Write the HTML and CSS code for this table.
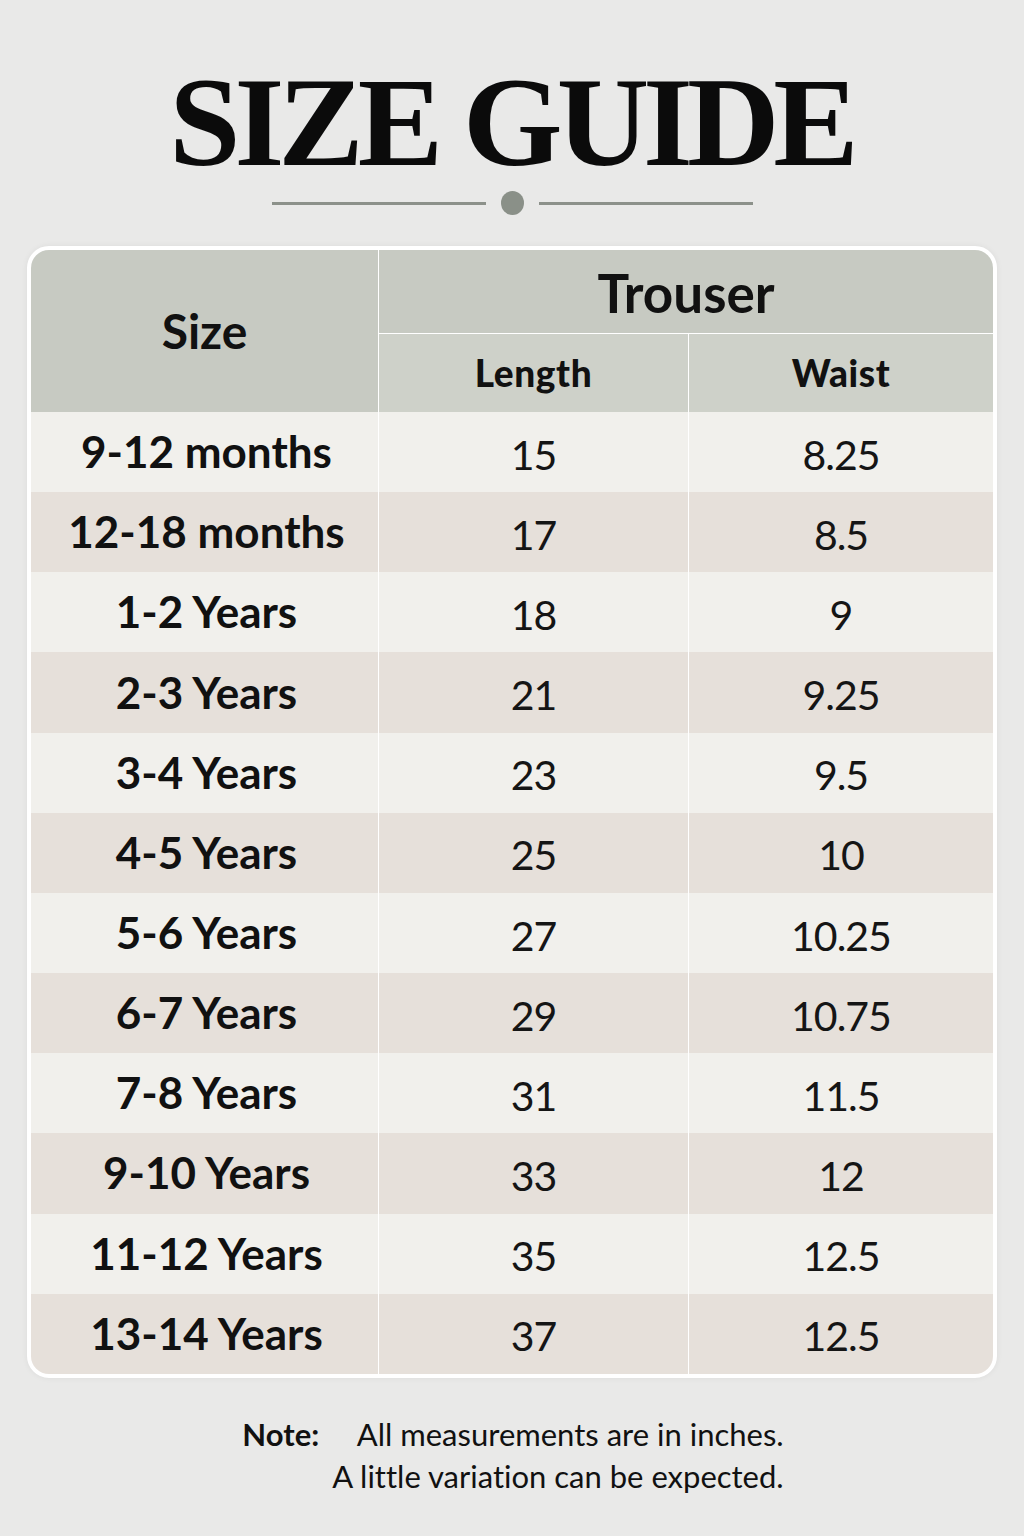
FILE: index.html
```html
<!DOCTYPE html>
<html lang="en">
<head>
<meta charset="utf-8">
<title>Size Guide</title>
<link rel="stylesheet" href="styles.css">
</head>
<body>
<main class="page">
  <h1 class="title">SIZE GUIDE</h1>
  <div class="divider">
    <span class="divider-line"></span>
    <span class="divider-dot"></span>
    <span class="divider-line"></span>
  </div>

  <section class="card">
    <div class="grid">
      <div class="cell head head-size">Size</div>
      <div class="cell head head-group">Trouser</div>
      <div class="cell sub">Length</div>
      <div class="cell sub">Waist</div>

      <div class="cell label light">9-12 months</div><div class="cell num light">15</div><div class="cell num light">8.25</div>
      <div class="cell label dark">12-18 months</div><div class="cell num dark">17</div><div class="cell num dark">8.5</div>
      <div class="cell label light">1-2 Years</div><div class="cell num light">18</div><div class="cell num light">9</div>
      <div class="cell label dark">2-3 Years</div><div class="cell num dark">21</div><div class="cell num dark">9.25</div>
      <div class="cell label light">3-4 Years</div><div class="cell num light">23</div><div class="cell num light">9.5</div>
      <div class="cell label dark">4-5 Years</div><div class="cell num dark">25</div><div class="cell num dark">10</div>
      <div class="cell label light">5-6 Years</div><div class="cell num light">27</div><div class="cell num light">10.25</div>
      <div class="cell label dark">6-7 Years</div><div class="cell num dark">29</div><div class="cell num dark">10.75</div>
      <div class="cell label light">7-8 Years</div><div class="cell num light">31</div><div class="cell num light">11.5</div>
      <div class="cell label dark">9-10 Years</div><div class="cell num dark">33</div><div class="cell num dark">12</div>
      <div class="cell label light">11-12 Years</div><div class="cell num light">35</div><div class="cell num light">12.5</div>
      <div class="cell label dark">13-14 Years</div><div class="cell num dark">37</div><div class="cell num dark">12.5</div>
    </div>
  </section>

  <div class="note">
    <span class="note-label">Note:</span>
    <div class="note-text">
      <span>All measurements are in inches.</span>
      <span>A little variation can be expected.</span>
    </div>
  </div>
</main>
</body>
</html>
```

FILE: styles.css
```css
* { box-sizing: border-box; }

html, body {
  margin: 0;
  padding: 0;
  background: #e9e9e8;
}

.page {
  width: 1024px;
  min-height: 1536px;
  display: flex;
  flex-direction: column;
  align-items: center;
  font-family: "Lato", "Open Sans", sans-serif;
  font-variant-ligatures: none;
  color: #111;
}

.title {
  margin: 58px 0 0 0;
  font-family: "Liberation Serif", "DejaVu Serif", serif;
  font-weight: 700;
  font-size: 128px;
  line-height: 1;
  letter-spacing: -6px;
  color: #0b0b0b;
  padding-right: 2px;
}

.divider {
  margin-top: 5px;
  height: 24px;
  display: flex;
  align-items: center;
  gap: 15px;
}

.divider-line {
  width: 214px;
  height: 3px;
  background: #8c918a;
}

.divider-dot {
  width: 23px;
  height: 24px;
  border-radius: 50%;
  background: #8a9088;
}

.card {
  margin-top: 31px;
  width: 970px;
  border: 4px solid #ffffff;
  border-radius: 22px;
  overflow: hidden;
  background: #ffffff;
  box-shadow: 0 0 6px rgba(0, 0, 0, 0.06);
}

.grid {
  display: grid;
  grid-template-columns: 347px 309px 304px;
  grid-template-rows: 84px 78px repeat(12, 80.17px);
  column-gap: 1px;
  background: #ffffff;
}

.cell {
  display: flex;
  align-items: center;
  justify-content: center;
}

.head {
  background: #c7cac2;
  font-weight: 700;
}

.head-size {
  grid-row: 1 / 3;
  font-size: 48px;
  padding-bottom: 2px;
}

.head-group {
  grid-column: 2 / 4;
  font-size: 53px;
  border-bottom: 1px solid #ffffff;
  padding-top: 2px;
}

.sub {
  background: #ced1c9;
  font-weight: 900;
  font-size: 37px;
  letter-spacing: 0.6px;
  padding-bottom: 2px;
}

.label {
  font-weight: 700;
  font-size: 44px;
  padding-bottom: 2px;
  padding-left: 4px;
}

.num {
  font-weight: 400;
  font-size: 41px;
  letter-spacing: -1px;
  padding-top: 4px;
  color: #151515;
}

.light { background: #f1f0ec; }
.dark { background: #e6e0da; }

.note {
  margin-top: 35px;
  display: flex;
  align-items: flex-start;
  gap: 13px;
  font-size: 31px;
  line-height: 42px;
  padding-left: 2px;
}

.note-label {
  font-weight: 700;
}

.note-text {
  display: flex;
  flex-direction: column;
  align-items: flex-end;
}
```
